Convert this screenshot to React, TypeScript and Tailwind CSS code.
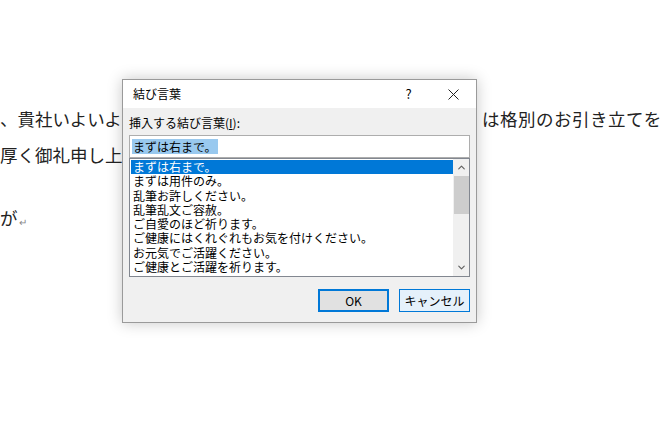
import { ChevronUp, ChevronDown } from "lucide-react";

const items = [
  "まずは右まで。",
  "まずは用件のみ。",
  "乱筆お許しください。",
  "乱筆乱文ご容赦。",
  "ご自愛のほど祈ります。",
  "ご健康にはくれぐれもお気を付けください。",
  "お元気でご活躍ください。",
  "ご健康とご活躍を祈ります。",
];

export default function App() {
  return (
    <div className="relative w-[660px] h-[442px] overflow-hidden bg-white">
      {/* 文書本文 (ダイアログの下に隠れる部分は省略) */}
      <div className="pt-[101px] text-[17.5px] leading-[36px] text-[#222] whitespace-nowrap font-['Noto_Sans_CJK_JP',sans-serif]">
        <div className="flex">
          <span className="w-[482px] shrink-0">、貴社いよいよ</span>
          <span className="tracking-[0.5px]">は格別のお引き立てを</span>
        </div>
        <div>厚く御礼申し上</div>
        <div className="mt-[23px] flex items-center">
          <span>が</span>
          <span className="text-[10px] text-[#888] ml-[1px] mt-[8px]">↵</span>
        </div>
      </div>

      {/* ダイアログ */}
      <div className="absolute left-[122px] top-[79px] w-[355px] h-[244px] border border-[#9a9a9a] bg-[#f0f0f0] shadow-[0_0_14px_rgba(0,0,0,0.22)] flex flex-col text-[12px] text-black font-['Noto_Sans_CJK_JP',sans-serif]">
        <div className="h-[28px] bg-white flex items-center">
          <span className="pl-[10px] flex-1">結び言葉</span>
          <div className="w-[45px] h-full flex items-center justify-center text-[13px]">?</div>
          <div className="w-[45px] h-full flex items-center justify-center">
            <svg width="11" height="11" viewBox="0 0 11 11">
              <path d="M0.5 0.5L10.5 10.5M10.5 0.5L0.5 10.5" stroke="#222" strokeWidth="1" />
            </svg>
          </div>
        </div>

        <div className="flex-1 px-[6px] pt-[7px] flex flex-col">
          <div className="leading-[16px]">
            挿入する結び言葉(<span className="underline">I</span>):
          </div>
          <div className="mt-[4px] h-[23px] border border-[#adadad] bg-white flex items-center px-[2px]">
            <span className="bg-[#99c9ef] leading-[15px] px-[1px]">まずは右まで。</span>
          </div>
          <div className="h-[119px] border border-[#828790] bg-white flex">
            <div className="flex-1 pt-[1px] pl-[1px] leading-[14.3px]">
              {items.map((t, i) => (
                <div key={t} className={i === 0 ? "bg-[#0078d7] text-white pl-[2px]" : "pl-[2px]"}>
                  {t}
                </div>
              ))}
            </div>
            <div className="w-[16px] bg-[#f0f0f0] flex flex-col items-center">
              <ChevronUp size={11} strokeWidth={2.5} className="text-[#606060] mt-[3px]" />
              <div className="w-[15px] h-[38px] bg-[#cdcdcd] mt-[3px]" />
              <div className="flex-1" />
              <ChevronDown size={11} strokeWidth={2.5} className="text-[#606060] mb-[3px]" />
            </div>
          </div>

          <div className="mt-[12px] flex justify-end gap-[10px]">
            <button className="w-[71px] h-[23px] bg-[#e1e1e1] border-2 border-[#0078d7] text-[12px]">OK</button>
            <button className="w-[71px] h-[23px] bg-[#e5f1fb] border border-[#0078d7] text-[12px]">キャンセル</button>
          </div>
        </div>
      </div>
    </div>
  );
}
